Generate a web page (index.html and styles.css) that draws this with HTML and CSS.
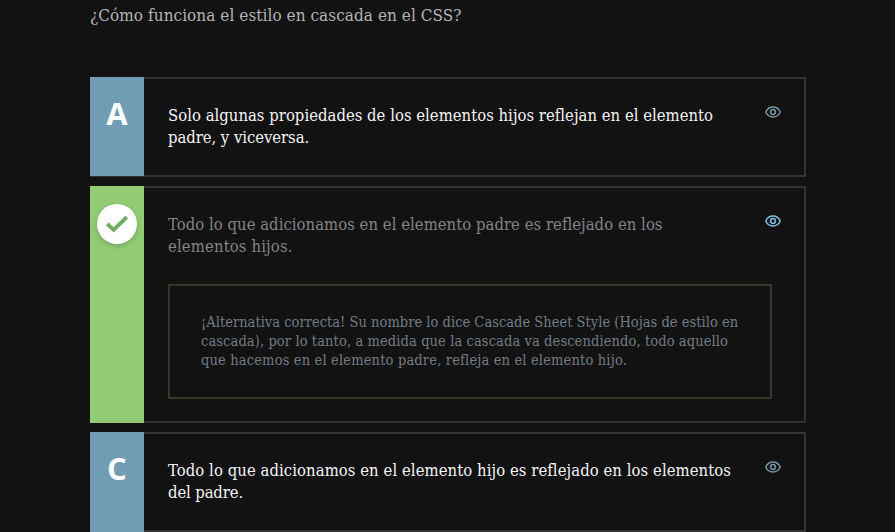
FILE: index.html
```html
<!DOCTYPE html>
<html lang="es">
<head>
<meta charset="utf-8">
<title>CSS en cascada</title>
<link rel="stylesheet" href="styles.css">
</head>
<body>
<svg class="sprite" aria-hidden="true">
  <symbol id="eye" viewBox="0 0 18 14">
    <path d="M1.8 7C3.2 3.8 5.8 2 9 2s5.800 1.800 7.200 5C14.800 10.200 12.200 12 9 12S3.200 10.200 1.800 7Z" fill="none" stroke="currentColor" stroke-width="1.500" stroke-linejoin="round"/>
    <circle cx="9" cy="7" r="2.400" fill="none" stroke="currentColor" stroke-width="1.500"/>
  </symbol>
</svg>
<main class="quiz">
  <p class="question">¿Cómo funciona el estilo en cascada en el CSS?</p>
  <ul class="options">
    <li class="option">
      <div class="letter">A</div>
      <div class="body">
        <p class="text"><span class="a1">Solo algunas propiedades de los elementos hijos reflejan en el elemento</span><br><span class="a2">padre, y viceversa.</span></p>
      </div>
      <svg class="eye"><use href="#eye"/></svg>
    </li>
    <li class="option selected">
      <div class="letter">
        <div class="check"><svg viewBox="0 0 24 18"><path d="M2.300 8.800 8.600 14.800 21.700 2.200" fill="none" stroke="#72ab63" stroke-width="3.900"/></svg></div>
      </div>
      <div class="body">
        <p class="text"><span class="b1">Todo lo que adicionamos en el elemento padre es reflejado en los</span><br><span class="b2">elementos hijos.</span></p>
        <p class="feedback"><span class="f1">¡Alternativa correcta! Su nombre lo dice Cascade Sheet Style (Hojas de estilo en</span><br><span class="f2">cascada), por lo tanto, a medida que la cascada va descendiendo, todo aquello</span><br><span class="f3">que hacemos en el elemento padre, refleja en el elemento hijo.</span></p>
      </div>
      <svg class="eye"><use href="#eye"/></svg>
    </li>
    <li class="option">
      <div class="letter">C</div>
      <div class="body">
        <p class="text"><span class="c1">Todo lo que adicionamos en el elemento hijo es reflejado en los elementos</span><br><span class="c2">del padre.</span></p>
      </div>
      <svg class="eye"><use href="#eye"/></svg>
    </li>
  </ul>
</main>
</body>
</html>
```
FILE: styles.css
```css
* { box-sizing: border-box; }
html { background: #121212; }
body {
  margin: 0;
  height: 532px;
  overflow: hidden;
  background: #121212;
  font-family: "DejaVu Serif Condensed", "DejaVu Serif", serif;
}
p, ul { margin: 0; padding: 0; }
.sprite { display: none; }
.quiz { width: 716px; margin-left: 90px; }
.question {
  height: 77px;
  padding-top: 3px;
  font-size: 17px;
  line-height: 24px;
  letter-spacing: 0.055px;
  color: #b4b4b4;
}
.options {
  display: flex;
  flex-direction: column;
  gap: 9px;
  list-style: none;
}
.option {
  display: flex;
  height: 100px;
  border: 2px solid #333;
  border-left: 0;
}
.selected { height: 237px; }
.letter {
  width: 54px;
  flex: none;
  margin: -2px 0 -1px;
  padding-top: 14px;
  background: #709cb4;
  color: #fff;
  font: 700 31px/44px "Open Sans", sans-serif;
  text-align: center;
}
.option:last-child .letter { margin-bottom: -2px; }
.selected .letter {
  margin-bottom: -2px;
  padding: 18px 0 0 7px;
  background: #91cb74;
}
.check {
  display: flex;
  align-items: center;
  justify-content: center;
  width: 40px;
  height: 40px;
  border-radius: 50%;
  background: #fff;
  box-shadow: 0 2px 5px rgba(0, 0, 0, .2);
}
.check svg { width: 24px; height: 18px; }
.body {
  width: 604px;
  flex: none;
  margin-left: 24px;
  padding-top: 26px;
  white-space: nowrap;
}
.text {
  height: 44px;
  font-size: 16.5px;
  line-height: 22px;
  color: #f5f5f5;
}
.selected .text { color: #848484; }
.feedback {
  height: 115px;
  margin-top: 26px;
  padding: 27px 31px 0;
  border: 2px solid #2e3b28;
  font-size: 14.5px;
  line-height: 19px;
  color: #747c84;
}
.eye {
  width: 18px;
  height: 14px;
  flex: none;
  margin: 26px 0 0 -8px;
  color: #7893a2;
}
.selected .eye { color: #83bfe2; }
.a1 { letter-spacing: .028px; }
.a2 { letter-spacing: -.04px; }
.b1 { letter-spacing: .047px; }
.b2 { letter-spacing: .15px; }
.f1 { letter-spacing: .025px; }
.f2 { letter-spacing: .105px; }
.f3 { letter-spacing: .164px; }
.c1 { letter-spacing: .074px; }
.c2 { letter-spacing: -.12px; }
```
